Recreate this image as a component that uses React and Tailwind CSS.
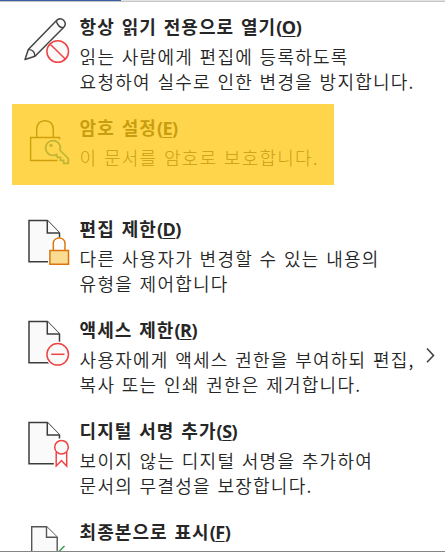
import React from 'react';

const Pencil = () => (
  <>
    <path d="M25 57.5 28.3 47.5 56.5 18.5C58.5 16.5 61.5 16.2 63.6 18.2 65.8 20.3 65.8 23.2 63.8 25.2L35 54.2Z" fill="#fafafa" stroke="#444" strokeWidth="1.5" strokeLinejoin="round" />
    <path d="M28.3 47.7C32.3 47.3 35 50 34.8 54M56.3 19C57.5 23.5 59.5 25.5 63.2 25.7" fill="none" stroke="#444" strokeWidth="1.4" />
    <circle cx="57.7" cy="49.5" r="12" fill="#fff" />
    <circle cx="57.7" cy="49.5" r="10.8" fill="#fafafa" stroke="#f04343" strokeWidth="1.5" />
    <path d="m50 42 15.5 15.3" stroke="#f04343" strokeWidth="1.5" />
  </>
);

const LockKey = () => (
  <g fill="none" strokeWidth="1.4">
    <path d="M36.7 34.5V27.5C36.7 19 53.3 19 53.3 27.5V34.5" stroke="none" />
    <path d="M36.7 34.5V27C36.7 19.5 40.5 17.7 45 17.7S53.3 19.5 53.3 27V34.5M59.5 36.5V34.5H30.6V57.5H57.5" stroke="#cda00c" />
    <path d="M56.5 51.5A7.4 7.4 0 1 1 60 47.3L68.3 55.5V60.4H63.6V57.4H60.4V54.3H57.4Z" stroke="#c0b535" fill="#ffd64b" strokeWidth="1.7" />
    <circle cx="51" cy="42.3" r="1.6" fill="#c0b535" />
  </g>
);

const Page = () => (
  <g transform="translate(0 0.7)" strokeWidth="1.5" stroke="#3c3c3c">
    <path d="M29 15.7H47.3L59.5 28.4V57H29Z" fill="#fafafa" />
    <path d="M47.3 15.8V28.3H59.5" fill="#fff" />
  </g>
);

const PageLock = () => (
  <>
    <Page />
    <g transform="translate(0 0.6)">
      <path d="M48 59V44H49.5V33H70V59Z" fill="#fff" />
      <path d="M53.3 46V39C53.3 31.6 65 31.6 65 39V46" fill="#fff" stroke="#dd750d" strokeWidth="1.5" />
      <path d="M49.9 45.8H68.5V59.7H49.9Z" fill="#fadc92" stroke="#dd750d" strokeWidth="1.5" />
    </g>
  </>
);

const PageMinus = () => (
  <>
    <Page />
    <circle cx="57.7" cy="49.3" r="12.7" fill="#fff" />
    <circle cx="57.7" cy="49.3" r="10.8" fill="#fafafa" stroke="#f04343" strokeWidth="1.5" />
    <path d="M51.2 49.3H64.5" stroke="#f04343" strokeWidth="1.5" />
  </>
);

const PageRibbon = () => (
  <>
    <Page />
    <path d="M53.8 60V46L52 39 56 32.5H66V60Z" fill="#fff" />
    <path d="M56.2 46V60L61.5 54.5 66.7 60V46" fill="#fff" stroke="#f04343" strokeWidth="1.5" />
    <circle cx="61.5" cy="41.2" r="6.8" fill="#fafafa" stroke="#f04343" strokeWidth="1.5" />
  </>
);

const PageCheck = () => (
  <>
    <path d="M31.7 19.7H46.5L57.2 30.3V60H31.7Z" fill="#fafafa" stroke="#555" strokeWidth="1.4" />
    <path d="M46.5 19.8V30.2H57.2" fill="#fff" stroke="#555" strokeWidth="1.4" />
    <path d="M56 43.8V47H62" fill="#fff" stroke="#fff" strokeWidth="2" />
    <path d="m58.5 45 6-6" stroke="#3c9d55" strokeWidth="1.5" />
  </>
);

const items = [
  { title: '항상 읽기 전용으로 열기', k: 'O', Icon: Pencil, lines: ['읽는 사람에게 편집에 등록하도록', '요청하여 실수로 인한 변경을 방지합니다.'] },
  { title: '암호 설정', k: 'E', Icon: LockKey, marked: true, lines: ['이 문서를 암호로 보호합니다.'] },
  { title: '편집 제한', k: 'D', Icon: PageLock, lines: ['다른 사용자가 변경할 수 있는 내용의', '유형을 제어합니다'] },
  { title: '액세스 제한', k: 'R', Icon: PageMinus, arrow: true, lines: ['사용자에게 액세스 권한을 부여하되 편집,', '복사 또는 인쇄 권한은 제거합니다.'] },
  { title: '디지털 서명 추가', k: 'S', Icon: PageRibbon, lines: ['보이지 않는 디지털 서명을 추가하여', '문서의 무결성을 보장합니다.'] },
  { title: '최종본으로 표시', k: 'F', Icon: PageCheck, lines: [] },
];

function Item({ title, k, Icon, lines, marked, arrow }) {
  return (
    <li className="relative flex h-[101px] shrink-0">
      {marked && <div className="absolute left-3 top-px h-[81px] w-[322px] bg-[#ffd64b]" />}
      <svg className="relative h-[101px] w-[79px] shrink-0" viewBox="0 0 79 101">
        <Icon />
      </svg>
      <div className={`relative whitespace-nowrap pl-[0.6px] pt-[9px] ${marked ? 'text-[#c89e10]' : 'text-[#262626]'}`}>
        <h2 className="h-[33px] text-[18px] font-bold leading-[30px] tracking-[1.05px] [word-spacing:1.7px]">
          {title}
          <span className="font-['Open_Sans'] text-[18px] font-bold tracking-[-0.5px]">
            (<span className="underline decoration-1 underline-offset-2">{k}</span>)
          </span>
        </h2>
        {lines.map((line) => (
          <p key={line} className={`h-[25px] text-[18px] leading-[25px] tracking-[1.25px] [word-spacing:1.3px] ${marked ? 'font-light' : 'font-[350]'}`}>
            {line}
          </p>
        ))}
      </div>
      {arrow && (
        <svg className="absolute left-[424px] top-[40px] h-5 w-4" viewBox="0 0 16 20">
          <path d="m3 3.5 6.5 7L3 17.2" fill="none" stroke="#444" strokeWidth="1.6" />
        </svg>
      )}
    </li>
  );
}

export default function App() {
  return (
    <main className="flex h-[552px] w-[445px] flex-col overflow-hidden bg-white font-['Noto_Sans_CJK_KR',sans-serif]">
      <div className="flex h-px shrink-0 bg-[#e3e3e3]">
        <div className="w-[121px] bg-[#3b5fa5]" />
      </div>
      <div className="h-px shrink-0 bg-[#c4c4c4]" />
      <ul className="flex h-[549px] shrink-0 flex-col overflow-hidden">
        {items.map((item) => (
          <Item key={item.k} {...item} />
        ))}
      </ul>
      <div className="h-px shrink-0 bg-[#858585]" />
    </main>
  );
}
